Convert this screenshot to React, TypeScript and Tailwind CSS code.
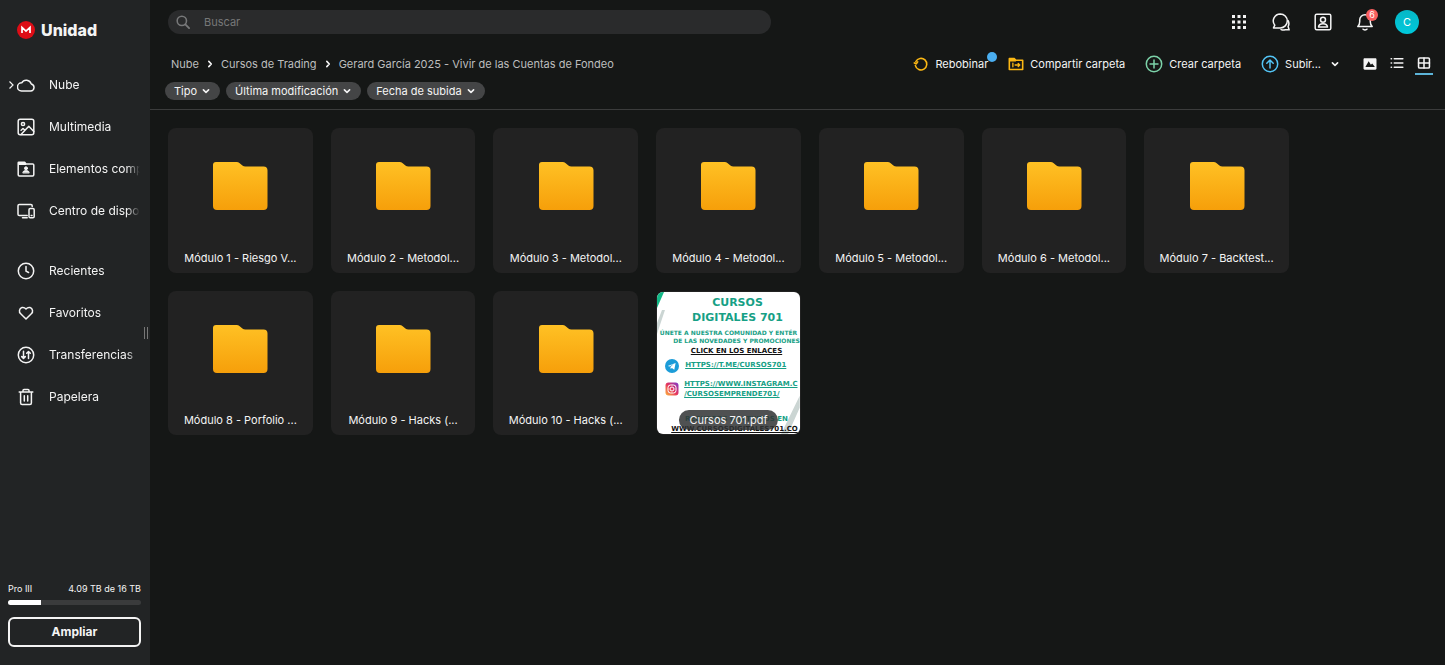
import type { ReactNode } from 'react';
import { clsx } from 'clsx';

interface IconProps {
  className?: string;
  children: ReactNode;
}

function Icon({ className, children }: IconProps) {
  return (
    <svg
      viewBox="0 0 18 18"
      fill="none"
      stroke="currentColor"
      strokeWidth="1.5"
      strokeLinecap="round"
      strokeLinejoin="round"
      aria-hidden="true"
      className={clsx('shrink-0', className ?? 'size-[18px]')}
    >
      {children}
    </svg>
  );
}

function Chevron({ className }: { className?: string }) {
  return (
    <svg
      viewBox="0 0 8 8"
      fill="none"
      stroke="currentColor"
      strokeWidth="1.6"
      strokeLinecap="round"
      strokeLinejoin="round"
      aria-hidden="true"
      className={clsx('size-2 shrink-0', className)}
    >
      <path d="M1.4 2.8 4 5.3l2.6-2.5" />
    </svg>
  );
}

const primaryItems = [
  {
    label: 'Nube',
    icon: (
      <path d="M4.500 15h9.100a3.600 3.600 0 0 0 .6-7.100A5.200 5.200 0 0 0 4.700 6.800a4.100 4.100 0 0 0-.2 8.200Z" />
    ),
  },
  {
    label: 'Multimedia',
    icon: (
      <>
        <rect x="1.2" y="1.2" width="15.6" height="15.6" rx="2" />
        <circle cx="6" cy="6" r="1.6" />
        <path d="m4 16.5 7.8-8.2 5 5.2M4.1 12.3 6 10.5l1.4 1.3" />
      </>
    ),
  },
  {
    label: 'Elementos compartidos',
    icon: (
      <>
        <path d="M1.200 2.700v12c0 .7.5 1.200 1.200 1.200h13.200c.7 0 1.200-.5 1.200-1.200V5.200c0-.7-.5-1.200-1.200-1.200H9L7.600 2.200H1.700c-.3 0-.5.2-.5.5Z" />
        <path d="M2 2.800h5.300l1.200 1.400H2Z" fill="currentColor" />
        <circle cx="9" cy="8.300" r="1.500" fill="currentColor" strokeWidth="1" />
        <path
          d="M5.800 12.700c0-1.500 1.200-2.100 3.200-2.100s3.200.6 3.200 2.100Z"
          fill="currentColor"
          strokeWidth=".8"
        />
      </>
    ),
  },
  {
    label: 'Centro de dispositivos',
    icon: (
      <>
        <path d="M15.200 4.500v-.7c0-.8-.6-1.300-1.300-1.300H2.300C1.500 2.500 1 3.100 1 3.800v8.400c0 .7.500 1.300 1.300 1.300h7.900M5.500 15.800h4.700" />
        <rect x="12" y="6.500" width="5.200" height="9.300" rx="1.300" />
        <path d="M14.200 13.500h.8" />
      </>
    ),
  },
];

const secondaryItems = [
  {
    label: 'Recientes',
    icon: (
      <>
        <circle cx="9" cy="9" r="7.700" />
        <path d="M9 4.500v4.700l2.600 1.300" />
      </>
    ),
  },
  {
    label: 'Favoritos',
    icon: (
      <path d="M9 15 3.700 9.800a3.700 3.700 0 0 1-1.200-3.500C3 3.500 6.500 2.200 9 5c2.500-2.800 6-1.500 6.500 1.300a3.700 3.700 0 0 1-1.200 3.500Z" />
    ),
  },
  {
    label: 'Transferencias',
    icon: (
      <>
        <circle cx="9" cy="9" r="7.700" />
        <path d="M6.500 5.300v7M4.700 10.600l1.800 1.800 1.800-1.800M11.500 12.500v-7M9.700 7.300l1.800-1.800 1.800 1.800" />
      </>
    ),
  },
  {
    label: 'Papelera',
    icon: (
      <>
        <path d="M2.200 4h13.600M6 3.800V2.500C6 1.900 6.400 1.500 7 1.500h4c.6 0 1 .4 1 1v1.300M3.600 4.200v10.900c0 .9.600 1.500 1.500 1.500h7.800c.9 0 1.500-.6 1.500-1.500V4.200" />
        <path d="M7.300 7.700v5.300M10.700 7.700v5.300" />
      </>
    ),
  },
];

interface NavItemProps {
  label: string;
  icon: ReactNode;
  expandable?: boolean;
}

function NavItem({ label, icon, expandable }: NavItemProps) {
  return (
    <li>
      <a href="#" className="flex h-[42px] items-center pr-[10px] pl-[7px]">
        <span className="flex w-[10px] shrink-0">
          {expandable && (
            <svg
              viewBox="0 0 8 10"
              fill="none"
              stroke="currentColor"
              strokeWidth="1.2"
              aria-hidden="true"
              className="h-[10px] w-2"
            >
              <path d="m2.500 1.500 3.500 3.500-3.500 3.500" />
            </svg>
          )}
        </span>
        <Icon>{icon}</Icon>
        <span className="ml-[14px] min-w-0 flex-1 overflow-hidden text-xs whitespace-nowrap [mask-image:linear-gradient(to_right,black_85%,transparent)]">
          {label}
        </span>
      </a>
    </li>
  );
}

function Sidebar() {
  return (
    <aside className="relative flex w-[150px] shrink-0 flex-col bg-[#222425] text-[#f4f4f4]">
      <a href="#" className="flex items-center gap-[6px] pt-[18px] pl-[17px]">
        <svg viewBox="0 0 18 18" className="size-[18px]" aria-hidden="true">
          <circle cx="9" cy="9" r="9" fill="#dd0d16" />
          <path
            d="M5 12V6.400L9 10.200l4-3.800V12"
            fill="none"
            stroke="#fff"
            strokeWidth="1.700"
          />
        </svg>
        <span className="text-base leading-6 font-extrabold">Unidad</span>
      </a>
      <nav className="mt-[22px] flex flex-col gap-[18px]">
        <ul>
          {primaryItems.map((item, i) => (
            <NavItem key={item.label} {...item} expandable={i === 0} />
          ))}
        </ul>
        <ul>
          {secondaryItems.map(item => (
            <NavItem key={item.label} {...item} />
          ))}
        </ul>
      </nav>
      <span className="absolute top-1/2 right-[2px] flex h-3 -translate-y-1/2 gap-[2px]">
        <span className="w-px bg-[#777]" />
        <span className="w-px bg-[#777]" />
      </span>
      <div className="mt-auto flex flex-col pr-[9px] pb-[18px] pl-2">
        <div className="flex justify-between text-[9px] leading-3">
          <span>Pro III</span>
          <span>4.09 TB de 16 TB</span>
        </div>
        <div className="mt-[5px] h-[5px] overflow-hidden rounded-full bg-[#3a3b3c]">
          <div className="h-full w-1/4 bg-white" />
        </div>
        <button
          type="button"
          className="mt-3 h-[30px] rounded-md border-2 border-[#f4f4f4] text-xs font-bold"
        >
          Ampliar
        </button>
      </div>
    </aside>
  );
}

function TopBar() {
  return (
    <div className="flex items-center justify-between pt-[10px] pr-[26px] pl-[18px]">
      <label className="flex h-6 w-[603px] items-center gap-[14px] rounded-full bg-[#2a2b2c] pl-2 text-[#777879]">
        <Icon className="size-[14px]">
          <circle cx="7.500" cy="7.500" r="6" strokeWidth="2" />
          <path d="m12 12 4.800 4.800" strokeWidth="2.400" />
        </Icon>
        <input
          type="search"
          aria-label="Buscar"
          placeholder="Buscar"
          className="w-full bg-transparent text-[11px] outline-none placeholder:text-[#777879]"
        />
      </label>
      <div className="flex items-center gap-6 text-[#f4f4f4]">
        <button type="button" aria-label="Aplicaciones">
          <Icon>
            <path
              d="M2 2h3v3H2zM7.500 2h3v3h-3zM13 2h3v3h-3zM2 7.500h3v3H2zM7.500 7.500h3v3h-3zM13 7.500h3v3h-3zM2 13h3v3H2zM7.500 13h3v3h-3zM13 13h3v3h-3z"
              fill="currentColor"
              stroke="none"
            />
          </Icon>
        </button>
        <button type="button" aria-label="Chat">
          <Icon>
            <path d="M8.300.9a7 7 0 1 1 0 14H1.500l1.300-2.700A7 7 0 0 1 8.300.9Z" />
            <path d="M16 7.500c1.100 1.800 1.200 4 .1 6l1 3.300h-4c-1.300.4-2.700.3-4-.2" />
          </Icon>
        </button>
        <button type="button" aria-label="Contactos">
          <Icon>
            <rect x="1.200" y="1.200" width="15.600" height="15.600" rx="1.500" />
            <circle cx="9" cy="6.800" r="2.500" />
            <path d="M4.500 14c.2-2.200 1.900-3.300 4.500-3.300s4.300 1.100 4.500 3.300Z" />
          </Icon>
        </button>
        <button type="button" aria-label="Notificaciones" className="relative">
          <Icon>
            <path d="M1.800 13.500h14.400c-1.300-1.300-1.900-2.500-1.900-4.700V7A5.300 5.300 0 0 0 3.700 7v1.800c0 2.200-.6 3.400-1.900 4.700Z" />
            <path d="M7 16.200c.6 1 3.400 1 4 0" />
          </Icon>
          <span className="absolute -top-1 left-[10px] flex size-3 items-center justify-center rounded-full bg-[#f9605f] text-[9px] text-white">
            6
          </span>
        </button>
        <button
          type="button"
          aria-label="Cuenta"
          className="-ml-[3px] flex size-6 items-center justify-center rounded-full bg-linear-to-b from-[#05b7c6] to-[#00c9dc] text-[11px] text-white"
        >
          C
        </button>
      </div>
    </div>
  );
}

const crumbs = [
  'Nube',
  'Cursos de Trading',
  'Gerard García 2025 - Vivir de las Cuentas de Fondeo',
];

function Breadcrumbs() {
  return (
    <nav aria-label="Ruta">
      <ol className="flex items-center text-[11px] text-[#bdbebe]">
        {crumbs.map((crumb, i) => (
          <li key={crumb} className="flex items-center">
            {i > 0 && <Chevron className="mx-[7px] -rotate-90 text-[#f4f4f4]" />}
            <a href="#">{crumb}</a>
          </li>
        ))}
      </ol>
    </nav>
  );
}

function Actions() {
  return (
    <div className="flex items-center text-[11px] text-[#f4f4f4]">
      <button type="button" className="relative flex items-center gap-[6px]">
        <Icon className="size-4 text-[#fcb814]">
          <path
            d="M3.200 6.200a6.500 6.500 0 1 1-.5 4.600M1.500 7.800l2.200 1 1.600-2.200"
            strokeWidth="1.800"
          />
        </Icon>
        Rebobinar
        <span className="absolute -top-1 -right-[9px] size-[10px] rounded-full bg-[#4aaef0]" />
      </button>
      <button type="button" className="ml-5 flex items-center gap-[6px]">
        <Icon className="size-4 text-[#fcb814]">
          <path
            d="M1.500 3v12.200h15V4.800H8.800L7.200 3Z"
            strokeWidth="1.800"
          />
          <path d="M2 3.500h5l1.500 1.800H2Z" fill="currentColor" />
          <path d="M5.500 8v4.200M8 10.100h5M11.500 8.400l1.700 1.700-1.700 1.700" />
        </Icon>
        Compartir carpeta
      </button>
      <button type="button" className="ml-5 flex items-center gap-[6px]">
        <Icon className="size-[18px] text-[#7cd3a9]">
          <circle cx="9" cy="9" r="7.700" />
          <path d="M9 5v8M5 9h8" />
        </Icon>
        Crear carpeta
      </button>
      <button type="button" className="ml-5 flex items-center gap-[6px]">
        <Icon className="size-[18px] text-[#53c4f5]">
          <circle cx="9" cy="9" r="7.700" />
          <path d="M9 13V5.200M5.800 8.200 9 5l3.200 3.200" />
        </Icon>
        Subir...
        <Chevron className="ml-1" />
      </button>
      <div className="ml-[17px] flex">
        <button
          type="button"
          aria-label="Vista de imágenes"
          className="flex w-[27px] justify-center"
        >
          <Icon className="size-4">
            <path
              fillRule="evenodd"
              d="M3 2.500h12c.8 0 1.300.5 1.300 1.300v10.400c0 .8-.5 1.300-1.300 1.300H3c-.8 0-1.300-.5-1.300-1.300V3.800c0-.8.5-1.300 1.300-1.300ZM3.800 12.500h10.700l-3-4-1.500 1.300L7.500 6Z"
              fill="currentColor"
              stroke="none"
            />
          </Icon>
        </button>
        <button
          type="button"
          aria-label="Vista de lista"
          className="flex w-[27px] justify-center"
        >
          <Icon className="size-[14px]">
            <path
              d="M1.500 3.500H2M1.500 9H2M1.500 14.500H2M5.500 3.500h11M5.500 9h11M5.500 14.500h11"
              strokeWidth="2"
            />
          </Icon>
        </button>
        <button
          type="button"
          aria-label="Vista de cuadrícula"
          className="relative flex w-[27px] justify-center"
        >
          <Icon className="size-[14px]">
            <rect x="2" y="2.500" width="14" height="13" rx="1.500" strokeWidth="2" />
            <path d="M9 2.500v13M2 9h14" strokeWidth="2" />
          </Icon>
          <span className="absolute -bottom-[3px] h-[2px] w-[18px] bg-[#5cb4d8]" />
        </button>
      </div>
    </div>
  );
}

const filters = ['Tipo', 'Última modificación', 'Fecha de subida'];

function Filters() {
  return (
    <div className="mt-2 flex gap-[6px] pl-[15px]">
      {filters.map(filter => (
        <button
          key={filter}
          type="button"
          className="flex h-[18px] items-center gap-[5px] rounded-full bg-[#444546] pr-[10px] pl-[9px] text-[11px] text-[#f4f4f4]"
        >
          {filter}
          <Chevron />
        </button>
      ))}
    </div>
  );
}

const folders = [
  'Módulo 1 - Riesgo V...',
  'Módulo 2 - Metodol...',
  'Módulo 3 - Metodol...',
  'Módulo 4 - Metodol...',
  'Módulo 5 - Metodol...',
  'Módulo 6 - Metodol...',
  'Módulo 7 - Backtest...',
  'Módulo 8 - Porfolio ...',
  'Módulo 9 - Hacks (...',
  'Módulo 10 - Hacks (...',
];

function FolderCard({ name }: { name: string }) {
  return (
    <a
      href="#"
      className="flex aspect-square flex-col items-center justify-between rounded-lg bg-[#222222] pt-[33px] pb-[7px]"
    >
      <svg viewBox="0 0 56 50" className="h-[50px] w-14" aria-hidden="true">
        <defs>
          <linearGradient id="folder" x1="0" y1="0" x2="0" y2="1">
            <stop offset="0" stopColor="#ffc124" />
            <stop offset="1" stopColor="#f69f0a" />
          </linearGradient>
        </defs>
        <path
          d="M4 1h20.500c1.300 0 2.300.4 3.200 1.200l2.700 2.200c.9.700 1.800 1 3 1H51.500A4 4 0 0 1 55.500 9.400V45a4 4 0 0 1-4 4H5a4 4 0 0 1-4-4V4a3 3 0 0 1 3-3Z"
          fill="url(#folder)"
        />
      </svg>
      <span className="text-[11px] leading-4 text-[#f4f4f4]">{name}</span>
    </a>
  );
}

function PdfPreview() {
  return (
    <div className="relative flex h-full flex-col items-center overflow-hidden rounded-md bg-white font-['DejaVu_Sans',sans-serif] font-bold whitespace-nowrap text-[#16a085]">
      <svg viewBox="0 0 143 143" className="absolute inset-0 size-full" aria-hidden="true">
        <path d="M0 0h7L0 16Z" fill="#12b886" />
        <path d="M5 18h3L0 42V31ZM143 104v12l-12 27h-7Z" fill="#cbd5d3" />
      </svg>
      <div className="relative flex w-full flex-col items-center pt-[3px]">
        <p className="ml-[18px] text-center text-[11px] leading-[15px]">
          CURSOS
          <br />
          DIGITALES 701
        </p>
        <p className="mt-1 text-[6px] leading-2">
          ÚNETE A NUESTRA COMUNIDAD Y ENTÉR
        </p>
        <p className="ml-4 text-[6px] leading-2">
          DE LAS NOVEDADES Y PROMOCIONES
        </p>
        <p className="ml-4 text-[7px] leading-3 text-[#111] underline">
          CLICK EN LOS ENLACES
        </p>
      </div>
      <div className="relative mt-[2px] flex w-full items-center gap-[6px] pl-2 text-[7px]">
        <svg viewBox="0 0 14 14" className="size-[14px] shrink-0" aria-hidden="true">
          <circle cx="7" cy="7" r="7" fill="#1c9cd8" />
          <path d="m2.800 6.900 7.800-3-1.300 6.800-2.400-1.800-1.200 1.200-.3-2.200 3.300-2.800-4.100 2.400Z" fill="#fff" />
        </svg>
        <span className="underline">HTTPS://T.ME/CURSOS701</span>
      </div>
      <div className="relative mt-[6px] flex w-full items-center gap-[5px] pl-2 text-[7px] leading-[10px]">
        <svg viewBox="0 0 14 14" className="size-[14px] shrink-0" aria-hidden="true">
          <defs>
            <linearGradient id="insta" x1="0" y1="1" x2="1" y2="0">
              <stop offset="0" stopColor="#fdb83c" />
              <stop offset=".5" stopColor="#e5345f" />
              <stop offset="1" stopColor="#7a3bd0" />
            </linearGradient>
          </defs>
          <rect x=".5" y=".5" width="13" height="13" rx="3" fill="url(#insta)" />
          <g fill="none" stroke="#fff">
            <rect x="3" y="3" width="8" height="8" rx="2.500" />
            <circle cx="7" cy="7" r="2" />
          </g>
        </svg>
        <span className="underline">
          HTTPS://WWW.INSTAGRAM.C
          <br />
          /CURSOSEMPRENDE701/
        </span>
      </div>
      <p className="relative mt-[15px] ml-4 text-[7px] leading-[10px]">
        RECURSOS GRATUITOS EN
      </p>
      <p className="relative ml-3 text-[7px] leading-[10px] text-[#111] underline">
        WWW.CURSOSDIGITALES701.CO
      </p>
    </div>
  );
}

function PdfCard() {
  return (
    <a href="#" className="relative aspect-square rounded-lg bg-[#222222] p-px">
      <PdfPreview />
      <span className="absolute bottom-[5px] left-1/2 flex h-5 -translate-x-1/2 items-center rounded-full bg-[#303234]/85 px-[10px] text-[11px] whitespace-nowrap text-[#f4f4f4]">
        Cursos 701.pdf
      </span>
    </a>
  );
}

export default function App() {
  return (
    <div className="flex min-h-screen bg-[#151716] font-[Inter,sans-serif]">
      <Sidebar />
      <main className="min-w-0 flex-1">
        <header className="border-b border-[#3b3c3c] pb-[9px]">
          <TopBar />
          <div className="mt-[20px] flex h-5 items-center justify-between pr-2 pl-[21px]">
            <Breadcrumbs />
            <Actions />
          </div>
          <Filters />
        </header>
        <div className="px-[18px] py-[18px]">
          <div className="grid max-w-[1121px] grid-cols-7 gap-[18px]">
            {folders.map(name => (
              <FolderCard key={name} name={name} />
            ))}
            <PdfCard />
          </div>
        </div>
      </main>
    </div>
  );
}
